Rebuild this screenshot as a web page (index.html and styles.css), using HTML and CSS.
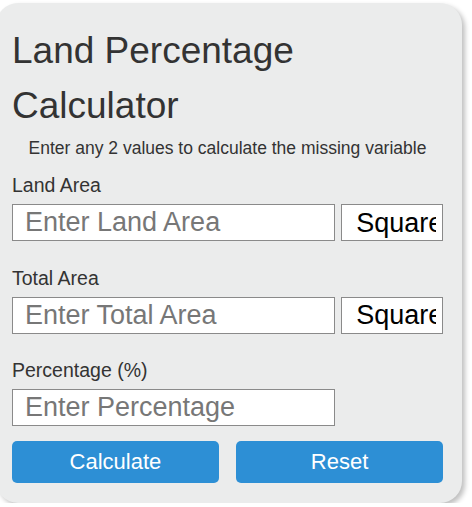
FILE: index.html
```html
<!DOCTYPE html>
<html lang="en">
<head>
    <meta charset="UTF-8">
    <meta name="viewport" content="width=device-width, initial-scale=1.0">
    <title>Land Percentage Calculator</title>
    <link rel="stylesheet" href="styles.css">
</head>
<body>
    <div class="calculator">
        <h1>Land Percentage Calculator</h1>
        <p class="intro">Enter any 2 values to calculate the missing variable</p>

        <div class="form-group">
            <label for="land-area">Land Area</label>
            <div class="input-row">
                <input type="number" id="land-area" placeholder="Enter Land Area">
                <select id="land-unit">
                    <option>Square Feet</option>
                    <option>Square Meters</option>
                    <option>Acres</option>
                    <option>Hectares</option>
                </select>
            </div>
        </div>

        <div class="form-group">
            <label for="total-area">Total Area</label>
            <div class="input-row">
                <input type="number" id="total-area" placeholder="Enter Total Area">
                <select id="total-unit">
                    <option>Square Feet</option>
                    <option>Square Meters</option>
                    <option>Acres</option>
                    <option>Hectares</option>
                </select>
            </div>
        </div>

        <div class="form-group">
            <label for="percentage">Percentage (%)</label>
            <div class="input-row">
                <input type="number" id="percentage" placeholder="Enter Percentage">
            </div>
        </div>

        <div class="button-row">
            <button class="btn">Calculate</button>
            <button class="btn">Reset</button>
        </div>
    </div>
</body>
</html>
```

FILE: styles.css
```css
* {
    margin: 0;
    padding: 0;
    box-sizing: border-box;
    font-family: 'Liberation Sans', Arial, sans-serif;
}

body {
    background-color: #ffffff;
}

.calculator {
    width: 466px;
    margin: 3px 0 0 -4px;
    padding: 20px 19px 20px 16px;
    background-color: #ebecec;
    border-radius: 22px;
    box-shadow: 3px 3px 5px rgba(0, 0, 0, 0.25);
    color: #333;
}

h1 {
    font-size: 37px;
    font-weight: normal;
    line-height: 55px;
}

.intro {
    margin-top: 5px;
    font-size: 17.5px;
    text-align: center;
}

.form-group {
    margin-top: 15px;
}

.form-group + .form-group {
    margin-top: 25.5px;
}

.form-group label {
    display: block;
    font-size: 19.5px;
    margin-bottom: 7px;
}

.input-row {
    display: flex;
    gap: 6px;
}

.input-row input {
    width: 75%;
    height: 37px;
    padding: 0 12px;
    border: 1px solid #8a8a8a;
    background-color: #fff;
    font-size: 27px;
    color: #333;
}

.input-row input::placeholder {
    color: #777;
}

.input-row select {
    flex: 1;
    min-width: 0;
    height: 37px;
    padding: 0 6px 0 14px;
    border: 1px solid #8a8a8a;
    background-color: #fff;
    font-size: 27px;
    color: #000;
    appearance: none;
    -webkit-appearance: none;
}

.button-row {
    display: flex;
    justify-content: space-between;
    margin-top: 15px;
}

.btn {
    width: 48%;
    height: 42px;
    background-color: #2d8fd5;
    color: white;
    border: none;
    border-radius: 5px;
    font-size: 22px;
    cursor: pointer;
}

.btn:hover {
    background-color: #2479b8;
}
```
